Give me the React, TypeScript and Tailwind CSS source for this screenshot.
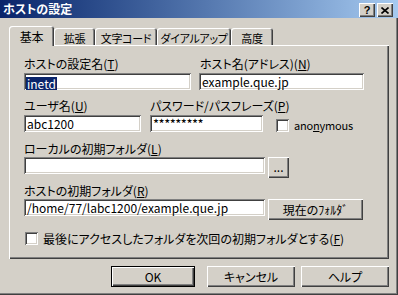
import React from "react";

// Win2000 style bevels
const sunken =
  "bg-white shadow-[inset_1px_1px_#808080,inset_-1px_-1px_#ffffff,inset_2px_2px_#404040,inset_-2px_-2px_#d4d0c8]";
const raised =
  "bg-[#d4d0c8] shadow-[inset_1px_1px_#ffffff,inset_-1px_-1px_#404040,inset_-2px_-2px_#808080]";

const tabs = [
  { label: "基本", width: "w-[45px]", active: true },
  { label: "拡張", width: "w-[41px]", active: false },
  { label: "文字コード", width: "w-[62px]", active: false },
  { label: "ダイアルアップ", width: "w-[74px]", active: false },
  { label: "高度", width: "w-[42px]", active: false },
];

const Label: React.FC<{ children: React.ReactNode }> = ({ children }) => (
  <div className="h-[14px] leading-[14px] whitespace-nowrap">{children}</div>
);

const Checkbox: React.FC = () => (
  <div className={`${sunken} w-[13px] h-[13px] shrink-0`} />
);

const App: React.FC = () => {
  return (
    <div className="w-[398px] h-[295px] bg-[#d4d0c8] flex flex-col text-[12px] text-black font-['Noto_Sans_CJK_JP',sans-serif] [font-feature-settings:'palt'] shadow-[inset_-1px_-1px_#404040,inset_-2px_-2px_#808080] overflow-hidden">
      {/* Title bar */}
      <div className="h-[18px] shrink-0 flex items-start justify-between pl-[3px] pr-[5px] bg-gradient-to-r from-[#0a246a] to-[#a6caf0]">
        <div className="text-white font-bold leading-[18px] whitespace-nowrap">
          ホストの設定
        </div>
        <div className="flex gap-[2px] pt-[3px]">
          <div className={`${raised} w-[16px] h-[14px] flex items-center justify-center`}>
            <span className="font-bold text-[11px] leading-none font-['Liberation_Sans',sans-serif]">?</span>
          </div>
          <div className={`${raised} w-[16px] h-[14px] flex items-center justify-center`}>
            <svg width="8" height="7" viewBox="0 0 8 7">
              <path d="M0.5 0.5 L7.5 6.5 M7.5 0.5 L0.5 6.5" stroke="#000" strokeWidth="1.6" />
            </svg>
          </div>
        </div>
      </div>

      {/* Tabs */}
      <div className="mt-[8px] h-[19px] flex items-end pl-[9px] shrink-0 text-[11px] tracking-[-0.3px]">
        {tabs.map((t) =>
          t.active ? (
            <div
              key={t.label}
              className={`${t.width} relative z-10 h-[20px] -mb-[1px] bg-[#d4d0c8] rounded-t-[3px] shadow-[inset_1px_1px_#ffffff,inset_-1px_0_#404040,inset_-2px_0_#808080] text-center pt-[4px] leading-[14px] whitespace-nowrap text-[12px]`}
            >
              {t.label}
            </div>
          ) : (
            <div
              key={t.label}
              className={`${t.width} h-[17px] bg-[#d4d0c8] rounded-t-[3px] shadow-[inset_1px_1px_#ffffff,inset_-1px_0_#404040,inset_-2px_0_#808080] text-center pt-[3px] leading-[14px] whitespace-nowrap`}
            >
              {t.label}
            </div>
          )
        )}
      </div>

      {/* Panel */}
      <div className="ml-[9px] w-[380px] h-[214px] shrink-0 bg-[#d4d0c8] shadow-[inset_1px_1px_#ffffff,inset_-1px_-1px_#404040,inset_-2px_-2px_#808080] pl-[15px] flex flex-col">
        {/* host name row */}
        <div className="flex mt-[12px] gap-[8px]">
          <div>
            <Label>
              ホストの設定名(<u>T</u>)
            </Label>
            <div className={`${sunken} mt-[2px] w-[167px] h-[17px] pl-[2px] pt-[2px]`}>
              <span className="bg-[#0a246a] text-white leading-[13px] inline-block px-[1px]">inetd</span>
            </div>
          </div>
          <div>
            <Label>
              <span className="pl-[1px]">ホスト名(アドレス)(<u>N</u>)</span>
            </Label>
            <div className={`${sunken} mt-[2px] w-[165px] h-[17px] pl-[3px] leading-[17px]`}>
              example.que.jp
            </div>
          </div>
        </div>

        {/* user row */}
        <div className="flex mt-[9px]">
          <div className="w-[117px]">
            <Label>
              ユーザ名(<u>U</u>)
            </Label>
            <div className={`${sunken} mt-[2px] w-[117px] h-[17px] pl-[3px] leading-[17px]`}>
              abc1200
            </div>
          </div>
          <div className="ml-[9px] w-[113px]">
            <Label>
              パスワード/パスフレーズ(<u>P</u>)
            </Label>
            <div className={`${sunken} mt-[2px] w-[113px] h-[17px] pl-[3px] leading-[17px] text-[13px] tracking-[-0.5px]`}>
              *********
            </div>
          </div>
          <div className="ml-[13px] mt-[19px] flex items-center gap-[5px]">
            <Checkbox />
            <span className="leading-[13px] text-[11px] tracking-[-0.2px]">
              ano<u>n</u>ymous
            </span>
          </div>
        </div>

        {/* local folder row */}
        <div className="mt-[10px]">
          <Label>
            ローカルの初期フォルダ(<u>L</u>)
          </Label>
          <div className="flex items-start mt-[1px] gap-[3px]">
            <div className={`${sunken} w-[241px] h-[17px]`} />
            <div className={`${raised} w-[21px] h-[21px] flex items-center justify-center leading-none pb-[2px]`}>
              ...
            </div>
          </div>
        </div>

        {/* host folder row */}
        <div className="mt-[6px]">
          <Label>
            ホストの初期フォルダ(<u>R</u>)
          </Label>
          <div className="flex items-start mt-[1px] gap-[3px]">
            <div className={`${sunken} w-[241px] h-[17px] pl-[3px] leading-[17px] whitespace-nowrap overflow-hidden`}>
              /home/77/labc1200/example.que.jp
            </div>
            <div className={`${raised} w-[95px] h-[21px] flex items-center justify-center leading-none`}>
              現在のﾌｫﾙﾀﾞ
            </div>
          </div>
        </div>

        {/* last folder checkbox */}
        <div className="flex items-center gap-[5px] mt-[12px] ml-[1px]">
          <Checkbox />
          <span className="leading-[13px] whitespace-nowrap">
            最後にアクセスしたフォルダを次回の初期フォルダとする(<u>F</u>)
          </span>
        </div>
      </div>

      {/* Dialog buttons */}
      <div className="flex mt-[7px] pl-[111px]">
        <div className="w-[84px] h-[21px] border border-black flex">
          <div className={`${raised} flex-1 flex items-center justify-center leading-none`}>OK</div>
        </div>
        <div className={`${raised} ml-[12px] w-[88px] h-[21px] flex items-center justify-center leading-none`}>
          キャンセル
        </div>
        <div className={`${raised} ml-[6px] w-[88px] h-[21px] flex items-center justify-center leading-none`}>
          ヘルプ
        </div>
      </div>
    </div>
  );
};

export default App;
